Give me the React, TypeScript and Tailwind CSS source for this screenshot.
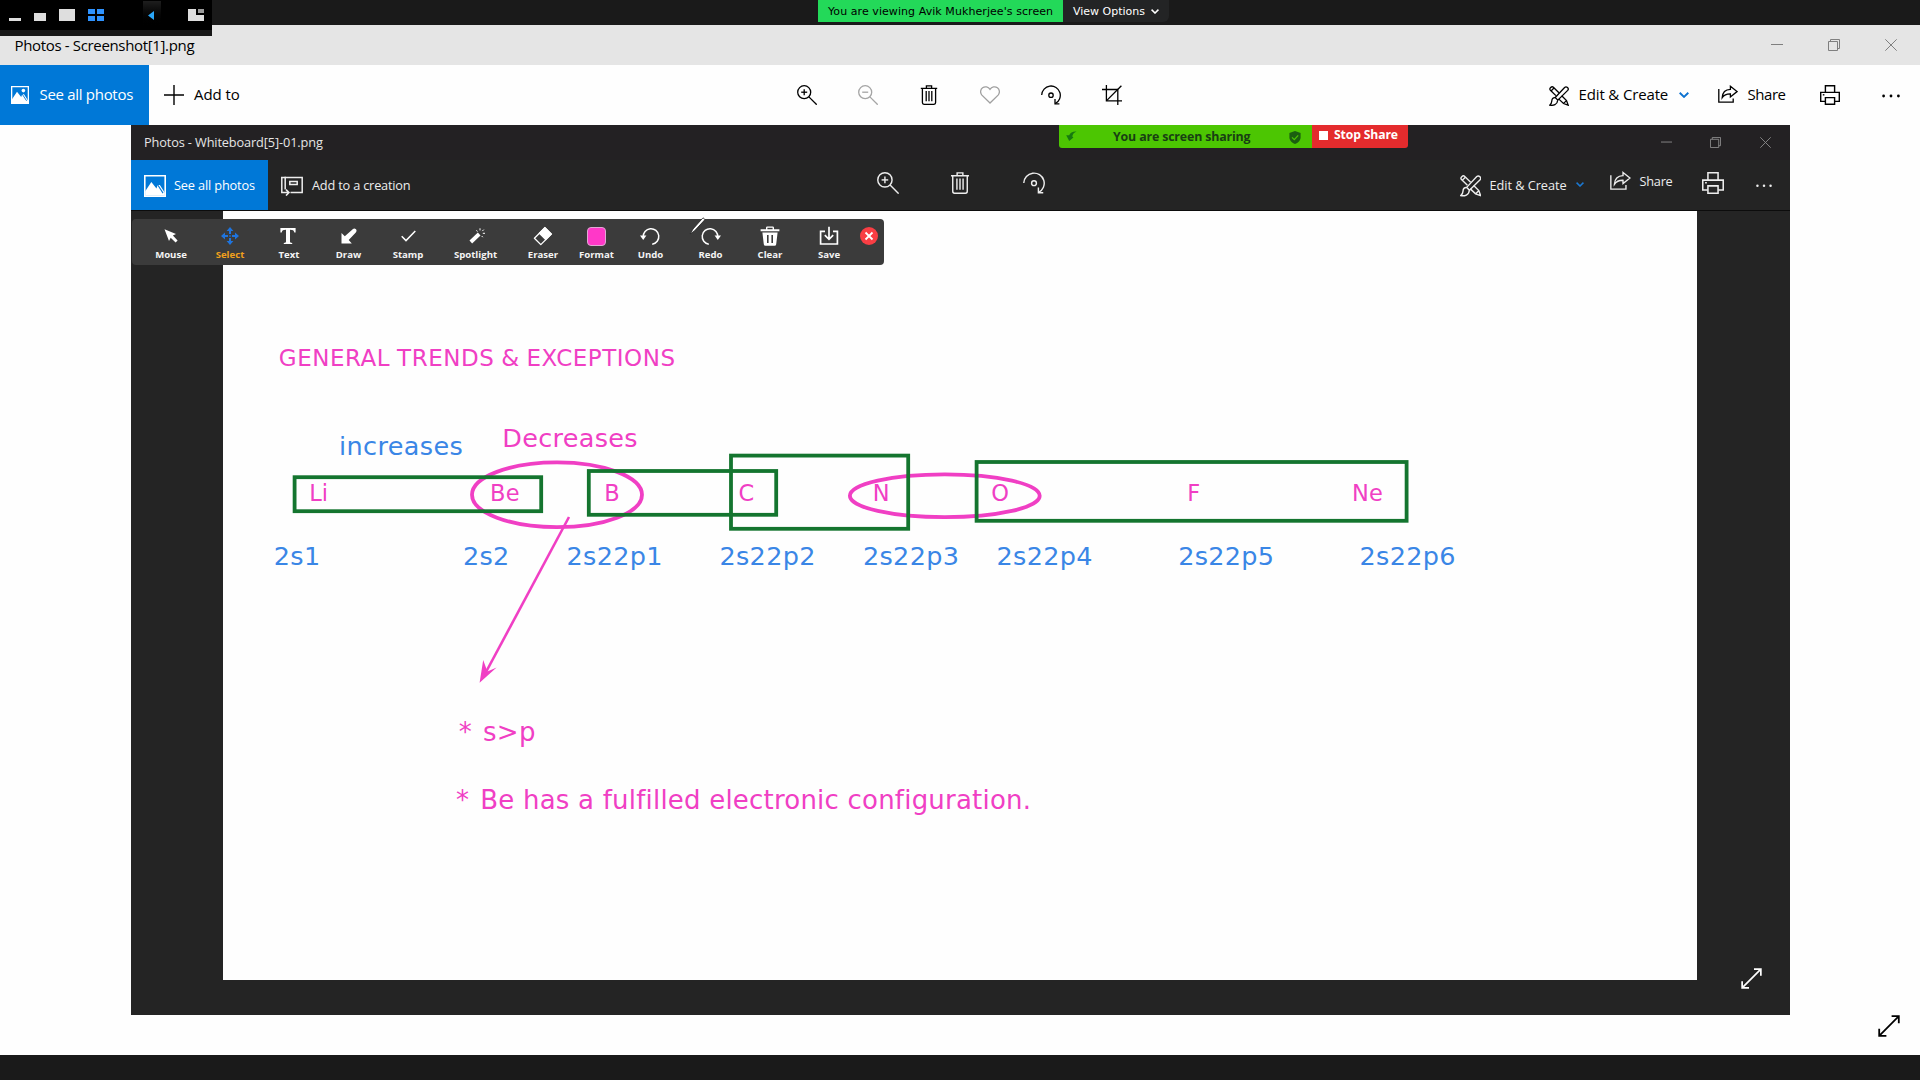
import type { ReactNode } from "react";

type IconProps = { className?: string };

const line = {
  fill: "none",
  stroke: "currentColor",
  strokeWidth: 1.3,
} as const;

function ZoomIcon({ className, minus }: IconProps & { minus?: boolean }) {
  return (
    <svg viewBox="0 0 20 20" className={className} {...line}>
      <circle cx="7.2" cy="7.2" r="6.5" />
      <path d="M11.9 11.9 19.7 19.7" />
      <path d="M4.2 7.2H10.2" />
      {!minus && <path d="M7.2 4.2V10.2" />}
    </svg>
  );
}

function TrashIcon({ className }: IconProps) {
  return (
    <svg viewBox="0 0 20 20" className={className} {...line}>
      <path d="M1.8 3.4H18.2M7.4 3V0.8H12.6V3" />
      <path d="M3.4 3.6V17.6Q3.4 19.3 5 19.3H15Q16.6 19.3 16.6 17.6V3.6" />
      <path d="M7.2 6V16.2M10 6V16.2M12.8 6V16.2" />
    </svg>
  );
}

function HeartIcon({ className }: IconProps) {
  return (
    <svg viewBox="0 0 20 20" className={className} {...line}>
      <path d="M10 18 1.9 10.1C-.2 7.6.4 4.3 2.6 2.8 5 1.1 8.3 1.8 10 4.4 11.7 1.8 15 1.1 17.4 2.8 19.6 4.3 20.2 7.6 18.1 10.1Z" />
    </svg>
  );
}

function RotateIcon({ className }: IconProps) {
  return (
    <svg viewBox="0 0 20 20" className={className} {...line}>
      <path d="M.7 10A9.3 9.3 0 1 1 14.2 18.6" />
      <path d="M14 14V18.9H18.4" />
      <circle cx="10" cy="10.2" r="2.2" />
    </svg>
  );
}

function CropIcon({ className }: IconProps) {
  return (
    <svg viewBox="0 0 20 20" className={className} {...line}>
      <path d="M0 4.5H15.8V20" />
      <path d="M4.4 0V15.8H20" />
      <path d="M4.6 15.6 19.4.7" />
    </svg>
  );
}

function EditIcon({ className }: IconProps) {
  return (
    <svg viewBox="0 0 20 20" className={className} {...line} strokeWidth={1.3}>
      <path d="M6.9 9.6 1.4 4.3C-.2 2.6 2.7-.3 4.4 1.3L9.9 6.8" />
      <path d="M2 5 5 2M12.7 9.8 17.5 14.5 19.2 19.2 14.5 17.5 9.6 12.9M14.6 17.4 17.4 14.6" />
      <path d="M6.2 11.5 15.6 1.5C17.5-.3 20.4 2.5 18.7 4.4L8.8 14.1Z" />
      <path d="M6.2 11.7C4 11.6 2.9 13.1 2.8 15 2.7 17 1.9 18.2.7 19.2 4.2 19.8 8.4 18.7 8.7 14.2" />
    </svg>
  );
}

function ShareIcon({ className }: IconProps) {
  return (
    <svg viewBox="0 0 20 18" className={className} {...line}>
      <path d="M.8 4V17.2H15.2V13.4" />
      <path d="M12.4 1.3 19 6.6 12.4 11.9V8.8C8.6 8.7 6.2 9.6 4.2 12.6 4.5 7.6 7.4 4.6 12.4 4.4Z" />
    </svg>
  );
}

function PrinterIcon({ className }: IconProps) {
  return (
    <svg viewBox="0 0 20 20" className={className} {...line} strokeWidth={1.4}>
      <path d="M5.4 7.2V.7H14.6V7.2" />
      <path d="M5.2 16.4H.7V7.4H19.3V16.4H14.8" />
      <path d="M5.4 12.6H14.6V19.3H5.4Z" />
      <path d="M2.8 9.8H4.4" />
    </svg>
  );
}

function ChevronIcon({ className }: IconProps) {
  return (
    <svg viewBox="0 0 10 6" className={className} {...line} strokeWidth={1.9}>
      <path d="M.7.7 5 4.9 9.3.7" />
    </svg>
  );
}

function DotsIcon({ className }: IconProps) {
  return (
    <svg viewBox="0 0 18 4" className={className} fill="currentColor">
      <circle cx="1.6" cy="2" r="1.4" />
      <circle cx="9" cy="2" r="1.4" />
      <circle cx="16.4" cy="2" r="1.4" />
    </svg>
  );
}

function PhotoIcon({ className, sun }: IconProps & { sun?: boolean }) {
  return (
    <svg viewBox="0 0 18 18" className={className} {...line}>
      <path d="M.65.65H17.35V17.35H.65Z" />
      <path
        d="M1 13.2 6 5.8 10.2 11 11.2 8.2 13 8.2 17 14.6V17H1Z"
        fill="currentColor"
        stroke="none"
      />
      <path d="M10.6 7.2 15.6 14.8" stroke="#0078d7" strokeWidth=".9" />
      {sun && <circle cx="12.4" cy="4.6" r="1.8" fill="currentColor" stroke="none" />}
    </svg>
  );
}

function CreationIcon({ className }: IconProps) {
  return (
    <svg viewBox="0 0 22 20" className={className} {...line} strokeWidth={1.5}>
      <path d="M4.2 13.5V1.5H21.2V16.4H9.5" />
      <path d="M.8 1V16.6H7.6M5 13.6 8 16.6 5 19.6" />
      <path d="M8.8 5.4H16.2V8.6H8.8Z" />
      <path d="M0 1.5H5" />
    </svg>
  );
}

function ExpandIcon({ className }: IconProps) {
  return (
    <svg viewBox="0 0 22 22" className={className} {...line} strokeWidth={1.8}>
      <path d="M1.2 20.8 20.8 1.2M13.6 1.2H20.8V8.2M1.2 13.8V20.8H8.4" />
    </svg>
  );
}

function MinimizeGlyph({ className }: IconProps) {
  return (
    <svg viewBox="0 0 12 12" className={className} {...line} strokeWidth={1}>
      <path d="M0 5.5H12" />
    </svg>
  );
}

function RestoreGlyph({ className }: IconProps) {
  return (
    <svg viewBox="0 0 12 12" className={className} {...line} strokeWidth={1}>
      <path d="M.5 2.5H9.5V11.5H.5ZM2.5 2.5V.5H11.5V9.5H9.5" />
    </svg>
  );
}

function CloseGlyph({ className }: IconProps) {
  return (
    <svg viewBox="0 0 12 12" className={className} {...line} strokeWidth={1}>
      <path d="M.3.3 11.7 11.7M11.7.3.3 11.7" />
    </svg>
  );
}

function Tool({
  label,
  width,
  active,
  children,
}: {
  label: string;
  width: string;
  active?: boolean;
  children: ReactNode;
}) {
  return (
    <div className={`flex shrink-0 flex-col items-center ${width}`}>
      <div className="mt-[7px] flex h-5 items-center justify-center">{children}</div>
      <span
        className={`mt-[2px] text-[9.6px] leading-[14px] font-bold ${
          active ? "text-[#f0a01c]" : "text-[#f4f4f4]"
        }`}
      >
        {label}
      </span>
    </div>
  );
}

function AnnotationBar() {
  return (
    <div className="absolute top-[94px] left-[1px] flex h-[46px] w-[752px] rounded-[4px] bg-[#3b3b3b] pl-[9.5px] text-white">
      <Tool label="Mouse" width="w-[59px]">
        <svg viewBox="0 0 14 14" className="size-3.5" fill="currentColor">
          <path d="M.5.3 12 4.9 8.9 6.6 13.6 11.6 11.6 13.6 6.7 8.8 5 12Z" />
        </svg>
      </Tool>
      <Tool label="Select" width="w-[59px]" active>
        <svg viewBox="0 0 18 18" className="size-[18px]" fill="#1f74dd">
          <path d="M9 0 12.4 4H5.6ZM9 18 5.6 14H12.4ZM0 9 4 5.6V12.4ZM18 9 14 12.4V5.6Z" />
          <path d="M8 3.5H10V7H8ZM8 11H10V14.5H8ZM3.5 8H7V10H3.5ZM11 8H14.5V10H11ZM8.3 8.3H9.7V9.7H8.3Z" />
        </svg>
      </Tool>
      <Tool label="Text" width="w-[59px]">
        <svg viewBox="0 0 16 16" className="mr-0.5 size-4" fill="currentColor">
          <path d="M.4 0H15.6V4.6H14.3C13.9 2.3 13 1.7 10 1.7V13.4C10 14.5 10.6 14.7 12.2 14.9V16H3.8V14.9C5.4 14.7 6 14.5 6 13.4V1.7C3 1.7 2.1 2.3 1.7 4.6H.4Z" />
        </svg>
      </Tool>
      <Tool label="Draw" width="w-[60px]">
        <svg viewBox="0 0 16 16" className="size-4" fill="currentColor">
          <path d="M.5 15.5V4.9L3.8 8.2 12 .9Q13.4-.3 15 1.3 16.2 3 14.8 4.4L7.7 12 10.8 15.5Z" />
        </svg>
      </Tool>
      <Tool label="Stamp" width="w-[59px]">
        <svg viewBox="0 0 15 12" className="h-3 w-[15px]" {...line} strokeWidth={1.5}>
          <path d="M.7 6.3 5 10.6 14.3.9" />
        </svg>
      </Tool>
      <Tool label="Spotlight" width="w-[76px]">
        <svg viewBox="0 0 16 16" className="ml-0.5 size-4" {...line}>
          <path d="M1.8 14 10.2 6" strokeWidth="3.8" />
          <path d="M7.5 2.3 8.4 3.6M11 .3V2.4M14.8 1.6 13.3 3.1M13.8 5.3H16M12.7 8 13.8 9.2" strokeWidth="1" />
        </svg>
      </Tool>
      <Tool label="Eraser" width="w-[59px]">
        <svg viewBox="0 0 20 20" className="mr-px size-5" {...line}>
          <path d="M1.4 12.2 11.9 1.7 18.3 8.1 7.8 18.6Z" strokeLinejoin="round" />
          <path d="M6.4 7.2 11.9 1.7 18.3 8.1 12.8 13.6Z" fill="currentColor" />
        </svg>
      </Tool>
      <Tool label="Format" width="w-[48px]">
        <div className="size-[19px] rounded-[4px] border border-[#e0a8d4] bg-[#ff38c8]" />
      </Tool>
      <Tool label="Undo" width="w-[60px]">
        <svg viewBox="0 0 20 20" className="mr-0.5 size-5" {...line} strokeWidth={1.5}>
          <path d="M3.2 11A7.8 7.8 0 1 1 12.2 18.2" />
          <path d="M0 9.6H6.4L3.2 14Z" fill="currentColor" stroke="none" />
        </svg>
      </Tool>
      <Tool label="Redo" width="w-[60px]">
        <svg viewBox="0 0 20 20" className="size-5" {...line} strokeWidth={1.5}>
          <path d="M16.8 11A7.8 7.8 0 1 0 7.8 18.2" />
          <path d="M20 9.6H13.6L16.8 14Z" fill="currentColor" stroke="none" />
        </svg>
      </Tool>
      <Tool label="Clear" width="w-[59px]">
        <svg viewBox="0 0 20 20" className="mr-px size-5" fill="currentColor">
          <path d="M.6 3.2H6V1.7Q6 .4 7.4.4H12.6Q14 .4 14 1.7V3.2H19.4V5.2H.6ZM7.4 3.2H12.6V1.8H7.4Z" fillRule="evenodd" />
          <path d="M2.4 6.4H17.6L16.2 18.2Q16 19.8 14.5 19.8H5.5Q4 19.8 3.8 18.2ZM7 9V17H8.6V9ZM11.4 9V17H13V9Z" fillRule="evenodd" />
        </svg>
      </Tool>
      <Tool label="Save" width="w-[59px]">
        <svg viewBox="0 0 20 20" className="mr-px size-5" {...line} strokeWidth={1.7}>
          <path d="M6 5.4H1.6V18H18.4V5.4H14M10 .8V13.2M5.8 9.2 10 13.4 14.2 9.2" />
        </svg>
      </Tool>
      <div className="mt-[8px] ml-[1.5px] size-[18px] shrink-0 rounded-full bg-[#f93e44]">
        <svg viewBox="0 0 18 18" className="size-[18px]" {...line} strokeWidth={1.8}>
          <path d="M5.5 5.5 12.5 12.5M12.5 5.5 5.5 12.5" />
        </svg>
      </div>
      <svg viewBox="0 0 17 18" className="absolute top-[-2px] left-[557px] h-[18px] w-[17px]">
        <path d="M1.2 16.8 4 12 14 .8 16 2.6 5.4 14Z" fill="#fff" stroke="#222" strokeWidth=".8" />
      </svg>
    </div>
  );
}

const PINK = "#f03fc4";
const BLUE = "#3a86e6";

const labels: [string, number, number, number, number, string][] = [
  ["increases", 339, 455.2, 25.5, 0.38, BLUE],
  ["Decreases", 502.2, 447.3, 25.5, 0.32, PINK],
  ["Li", 309.2, 501, 22.5, 0, PINK],
  ["Be", 490, 501, 22.5, 0.3, PINK],
  ["B", 604.2, 501, 22.5, 0, PINK],
  ["C", 738.6, 501, 22.5, 0, PINK],
  ["N", 872.8, 501, 22.5, 0, PINK],
  ["O", 991.3, 501, 22.5, 0, PINK],
  ["F", 1187.3, 501, 22.5, 0, PINK],
  ["Ne", 1351.9, 501, 22.5, 0.4, PINK],
  ["2s1", 273.8, 565, 25.5, 0.3, BLUE],
  ["2s2", 463, 565, 25.5, 0.3, BLUE],
  ["2s22p1", 566.6, 565, 25.5, 0.3, BLUE],
  ["2s22p2", 719.5, 565, 25.5, 0.3, BLUE],
  ["2s22p3", 863, 565, 25.5, 0.3, BLUE],
  ["2s22p4", 996.6, 565, 25.5, 0.3, BLUE],
  ["2s22p5", 1178.2, 565, 25.5, 0.3, BLUE],
  ["2s22p6", 1359.6, 565, 25.5, 0.3, BLUE],
];

function Whiteboard() {
  return (
    <svg
      viewBox="223 211 1474 769"
      className="block h-[769px] w-[1474px]"
      fontFamily='"DejaVu Sans", Verdana, sans-serif'
    >
      <g fill="none" stroke={PINK} strokeWidth="3.8">
        <ellipse cx="557" cy="494.8" rx="85" ry="32.4" />
        <ellipse cx="944.8" cy="495.8" rx="94.9" ry="21.4" />
      </g>
      <g fill="none" stroke="#14752f" strokeWidth="3.8">
        <rect x="294.6" y="477.2" width="246.6" height="34" />
        <rect x="588.8" y="471" width="187.4" height="43.8" />
        <rect x="731" y="455.6" width="177.2" height="73.2" />
        <rect x="976.6" y="462" width="430" height="58.8" />
      </g>
      <path d="M569 517 486 672" stroke={PINK} strokeWidth="2.6" />
      <path d="M479.6 682.8 483.2 660 487.4 671.4 496.6 667.4Z" fill={PINK} />
      <text x="278.8" y="365.7" fontSize="23" letterSpacing=".52" wordSpacing="-.9" fill={PINK}>
        GENERAL TRENDS &amp; EXCEPTIONS
      </text>
      {labels.map(([text, x, y, size, spacing, color]) => (
        <text key={text} x={x} y={y} fontSize={size} letterSpacing={spacing} fill={color}>
          {text}
        </text>
      ))}
      <text x="458.8" y="741.4" fontSize="26" letterSpacing=".4" fill={PINK}>
        * <tspan dx="2">s&gt;p</tspan>
      </text>
      <text x="456" y="808.8" fontSize="26" letterSpacing=".21" fill={PINK}>
        * <tspan dx="2.6">Be has a fulfilled electronic configuration.</tspan>
      </text>
    </svg>
  );
}

function SharingBar() {
  return (
    <div className="absolute top-0 left-[928px] flex h-[23px] w-[349px] overflow-hidden rounded-b-[3px] font-bold">
      <div className="flex w-[253px] items-center bg-[#4cc602] text-[#183f13]">
        <svg viewBox="0 0 11 11" className="ml-[7px] size-[11px]" fill="#177a10">
          <path d="M10.5.5C7 .2 4 1.6 3.2 4.2H.2L3.2 9.9 7.4 6.6 6.3 5.6C6.5 3.2 8 1.7 10.5.5Z" />
        </svg>
        <span className="ml-[36px] w-[138px] pt-px text-[12.4px] leading-none tracking-[-0.16px] whitespace-nowrap">
          You are screen sharing
        </span>
        <svg viewBox="0 0 12 13" className="mt-[2px] ml-[38px] h-[13px] w-3" fill="#1b5f10">
          <path d="M6 0 11.6 2.1V6.2C11.6 9.6 9 11.8 6 13 3 11.8.4 9.6.4 6.2V2.1Z" />
          <path d="M3 6.3 5.3 8.6 9.2 4.3" fill="none" stroke="#4cc602" strokeWidth="1.2" />
        </svg>
      </div>
      <div className="flex flex-1 items-center bg-[#e42b2d] pb-[2px] text-white">
        <div className="ml-[7px] size-[9px] bg-white" />
        <span className="ml-[6px] text-[12.2px] leading-none tracking-[-0.14px] whitespace-nowrap">Stop Share</span>
      </div>
    </div>
  );
}

function InnerWindow() {
  return (
    <div className="relative ml-[131px] flex h-[890px] w-[1659px] flex-col bg-[#242424] text-white">
      <div className="flex h-[34.5px] items-center bg-[#232123] pl-[13px]">
        <span className="pt-px text-[12.75px] leading-none tracking-[-0.13px] text-[#e6e6e6]">
          Photos - Whiteboard[5]-01.png
        </span>
        <div className="mr-[19px] ml-auto flex items-center text-[#8a8a8a]">
          <MinimizeGlyph className="size-[11px]" />
          <RestoreGlyph className="ml-[38px] size-[11px]" />
          <CloseGlyph className="ml-[39px] size-[11px]" />
        </div>
      </div>
      <div className="flex h-[51.5px] items-center border-b border-[#0c0c0c] text-[12.75px] leading-none whitespace-nowrap text-[#ededed]">
        <div className="flex h-full w-[137px] items-center bg-[#0078d7] text-white">
          <PhotoIcon className="mt-0.5 ml-[13px] size-[22px]" />
          <span className="ml-[8px] pt-px tracking-[-0.15px]">See all photos</span>
        </div>
        <CreationIcon className="mt-0.5 ml-[13px] h-5 w-[22px]" />
        <span className="ml-[9px] w-[100px] pt-px tracking-[-0.19px]">Add to a creation</span>
        <ZoomIcon className="mb-1 ml-[464.5px] size-[22px]" />
        <TrashIcon className="mb-1 ml-[50.5px] size-[22px]" />
        <RotateIcon className="mb-1 ml-[52px] size-[22px]" />
        <EditIcon className="mt-0.5 ml-[414.5px] size-[21.5px]" />
        <span className="ml-[8.5px] w-[78px] pt-px tracking-[-0.05px]">Edit &amp; Create</span>
        <ChevronIcon className="ml-[8px] h-[5px] w-2 text-[#1b78d2]" />
        <ShareIcon className="mb-2 ml-[26px] h-[19px] w-[21px]" />
        <span className="mb-[7px] ml-[9px] w-[34px] tracking-[-0.25px]">Share</span>
        <PrinterIcon className="mb-1 ml-[28px] size-[22px]" />
        <DotsIcon className="mt-[3px] ml-[32px] h-[3.6px] w-4" />
      </div>
      <div className="ml-[92px] h-[769px] w-[1474px] bg-[#fefefe]">
        <Whiteboard />
      </div>
      <AnnotationBar />
      <SharingBar />
      <ExpandIcon className="absolute right-[28px] bottom-[26px] size-[21px]" />
    </div>
  );
}

function ViewerControls() {
  return (
    <div className="absolute top-0 left-0 flex h-9 w-[212px] flex-col bg-[#181818]">
      <div className="flex h-[30px] items-start bg-black">
        <div className="mt-[18px] ml-[9px] h-[3px] w-3 bg-[#dedede]" />
        <div className="mt-[13px] ml-[13px] h-2 w-3 bg-[#dedede]" />
        <div className="mt-[9px] ml-[13px] h-3 w-4 bg-[#dedede]" />
        <div className="mt-[9px] ml-[13px] grid h-3 w-4 grid-cols-2 gap-0.5">
          <div className="bg-[#2f93ff]" />
          <div className="bg-[#2f93ff]" />
          <div className="bg-[#2f93ff]" />
          <div className="bg-[#2f93ff]" />
        </div>
        <div className="mt-px ml-[39px] flex h-[27px] w-[18px] items-center bg-linear-to-b from-[#1e1e1e] to-black">
          <svg viewBox="0 0 6 9" className="mt-px ml-[5px] h-[9px] w-1.5" fill="#2aa6f7">
            <path d="M6 0V9L0 4.5Z" />
          </svg>
        </div>
        <svg viewBox="0 0 16 12" className="mt-[9px] ml-[27px] h-3 w-4">
          <path d="M0 0H8V6H16V12H0Z" fill="#dedede" />
          <path d="M10 0H16V4H10Z" fill="#9a9a9a" />
        </svg>
      </div>
    </div>
  );
}

export default function App() {
  return (
    <div className="relative flex h-[1080px] w-[1920px] flex-col overflow-hidden bg-[#fefefe] font-['Open_Sans','Noto_Sans',sans-serif] text-black">
      <div className="flex h-[25px] items-start bg-[#1a1a1a] font-['DejaVu_Sans',sans-serif] text-[11px] leading-[22px] whitespace-nowrap">
        <div className="h-[22px] w-[245px] ml-[818px] bg-[#23d959] pt-px pl-[10px] tracking-[0.07px]">
          You are viewing Avik Mukherjee's screen
        </div>
        <div className="flex h-[22px] w-[106px] items-center rounded-br-md bg-[#232425] pt-px pl-[10px] text-white">
          View Options
          <ChevronIcon className="ml-1.5 h-[5px] w-2" />
        </div>
      </div>

      <div className="flex h-10 items-center bg-[#e5e5e5] pl-[14.5px]">
        <span className="pt-px text-[15px] leading-none tracking-[-0.34px]">Photos - Screenshot[1].png</span>
        <div className="mr-[23px] ml-auto flex items-center text-[#7f7f7f]">
          <MinimizeGlyph className="size-3" />
          <RestoreGlyph className="ml-[45px] size-3" />
          <CloseGlyph className="ml-[45px] size-3" />
        </div>
      </div>

      <div className="flex h-[60px] items-center text-[15px] leading-none whitespace-nowrap">
        <div className="flex h-full w-[149px] items-center bg-[#0078d7] text-white">
          <PhotoIcon className="ml-[11px] size-[18px]" sun />
          <span className="ml-[10.5px] pb-0.5 tracking-[-0.3px]">See all photos</span>
        </div>
        <svg viewBox="0 0 20 20" className="ml-[15px] size-5" {...line} strokeWidth={1.4}>
          <path d="M0 10H20M10 0V20" />
        </svg>
        <span className="ml-[10px] w-[60px] pb-0.5 tracking-[-0.07px]">Add to</span>
        <ZoomIcon className="ml-[543px] size-5" />
        <ZoomIcon className="ml-[41px] size-5 text-[#a5a5a5]" minus />
        <TrashIcon className="ml-[40.5px] size-5" />
        <HeartIcon className="ml-[41.5px] size-5 text-[#a0a0a0]" />
        <RotateIcon className="ml-[41px] size-5" />
        <CropIcon className="ml-[41px] size-5" />
        <EditIcon className="mt-0.5 ml-[427px] size-5" />
        <span className="ml-[9.5px] w-[90px] pb-0.5 tracking-[-0.14px]">Edit &amp; Create</span>
        <ChevronIcon className="ml-[10px] h-1.5 w-2.5 text-[#0d72d0]" />
        <ShareIcon className="mb-0.5 ml-[29.5px] h-[18px] w-5" />
        <span className="ml-[9.5px] w-[38px] pb-0.5 tracking-[-0.45px]">Share</span>
        <PrinterIcon className="ml-[34.5px] size-5" />
        <DotsIcon className="mt-0.5 ml-[42px] h-1 w-[18px]" />
      </div>

      <InnerWindow />

      <div className="mt-10 h-[25px] bg-[#1a1a1a]" />

      <ExpandIcon className="absolute right-[20px] bottom-[43px] size-[22px]" />
      <ViewerControls />
    </div>
  );
}
